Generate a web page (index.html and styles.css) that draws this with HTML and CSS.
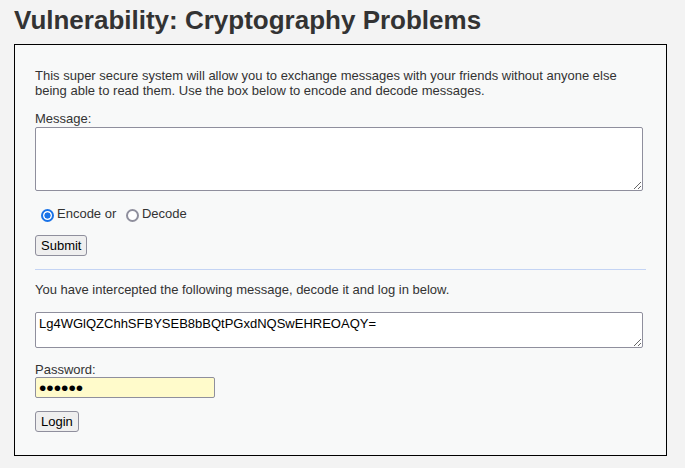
FILE: index.html
```html
<!DOCTYPE html>
<html>
<head>
<meta charset="utf-8">
<link rel="stylesheet" href="styles.css">
</head>
<body>
<h1 class="title">Vulnerability: Cryptography Problems</h1>
<div class="panel">
  <p class="intro">This super secure system will allow you to exchange messages with your friends without anyone else being able to read them. Use the box below to encode and decode messages.</p>
  <form class="form">
    <label class="label" for="msg">Message:</label>
    <textarea class="area area-big" id="msg"></textarea>
    <div class="radios"><input type="radio" class="radio" name="d" checked><span class="rtext">Encode or</span> <input type="radio" class="radio" name="d"><span class="rtext">Decode</span></div>
    <button type="button" class="btn">Submit</button>
  </form>
  <hr class="rule">
  <p class="info">You have intercepted the following message, decode it and log in below.</p>
  <textarea class="area area-small">Lg4WGlQZChhSFBYSEB8bBQtPGxdNQSwEHREOAQY=</textarea>
  <label class="label label-pw">Password:</label>
  <input type="password" class="pw" value="secret">
  <button type="button" class="btn btn-login">Login</button>
</div>
</body>
</html>
```

FILE: styles.css
```css
html, body {
  background: #f3f3f3;
}
body {
  margin: 0;
  padding: 0 14px;
  font-family: "Liberation Sans", Arial, sans-serif;
  font-size: 13px;
  color: #333;
}
.title {
  margin: 0;
  padding: 5px 0 9px 0;
  font-size: 26px;
  line-height: 30px;
  font-weight: bold;
  color: #333;
}
.panel {
  width: 611px;
  border: 1px solid #000;
  background: #f8f9f9;
  padding: 23px 20px 23px 20px;
}
.intro {
  margin: 0 0 13px 0;
  line-height: 15px;
}
.form {
  margin: 0;
}
.label {
  display: block;
  line-height: 15px;
}
.area {
  display: block;
  box-sizing: border-box;
  width: 608px;
  margin: 1px 0 0 0;
  border: 1px solid #8f8f9d;
  border-radius: 2px;
  background: #fff;
  font-family: "Liberation Sans", Arial, sans-serif;
  font-size: 13px;
  color: #000;
  padding: 3px;
}
.area-big {
  height: 64px;
}
.area-small {
  height: 36px;
  margin-top: 15px;
}
.radios {
  margin-top: 14px;
  height: 18px;
  line-height: 15px;
  padding-top: 1px;
  box-sizing: border-box;
}
.radio {
  appearance: none;
  -webkit-appearance: none;
  box-sizing: border-box;
  vertical-align: top;
  margin: 3px 3px 0 6px;
  width: 13px;
  height: 13px;
  border: 2px solid #8f8f9d;
  border-radius: 50%;
  background: #fff;
}
.radio:checked {
  border-color: #1a73e8;
  background: radial-gradient(circle, #1a73e8 0 2.8px, #fff 3.4px);
}
.rtext {
  line-height: 15px;
}
.btn {
  display: block;
  margin-top: 12px;
  font-family: "Liberation Sans", Arial, sans-serif;
  font-size: 13px;
  color: #000;
  background: #efefef;
  border: 1px solid #8f8f9d;
  border-radius: 3px;
  padding: 2px 5px;
  height: 21px;
  line-height: 15px;
}
.rule {
  border: 0;
  border-top: 1px solid #c4d4f4;
  margin: 13px 0 0 0;
  height: 0;
}
.info {
  margin: 12px 0 0 0;
  line-height: 15px;
}
.label-pw {
  margin-top: 14px;
}
.pw {
  display: block;
  box-sizing: border-box;
  width: 180px;
  height: 21px;
  margin: 0;
  border: 1px solid #8f8f9d;
  border-radius: 2px;
  background: #fffbcb;
  padding: 0 3px;
  font-size: 21px;
  line-height: 19px;
  font-family: "Liberation Sans", Arial, sans-serif;
  color: #000;
}
.btn-login {
  margin-top: 13px;
}
```
